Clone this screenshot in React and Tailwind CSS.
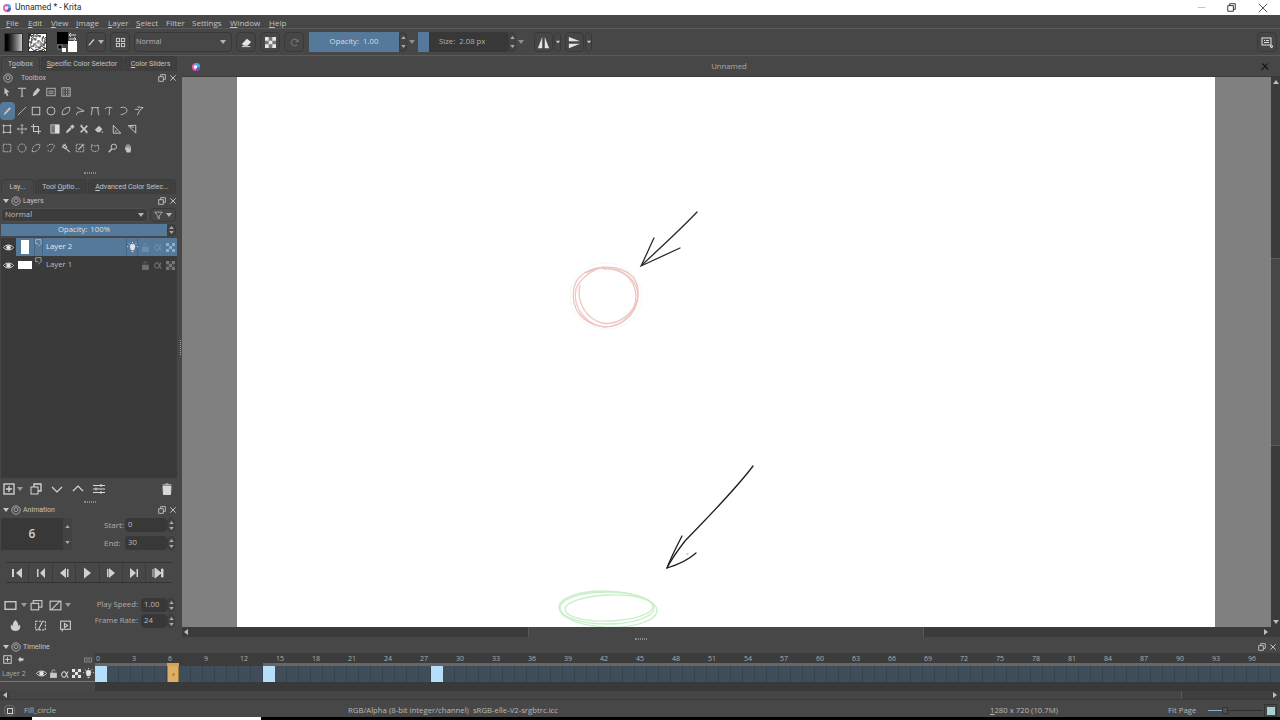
const Ic = ({ size = 12, className = '', children }) => (
  <svg width={size} height={size} viewBox="0 0 12 12" fill="none" stroke="currentColor" strokeWidth="1" className={'shrink-0 ' + className}>
    {children}
  </svg>
);

const Caret = ({ className = 'text-[#b4b4b4]' }) => (
  <svg width="6" height="4" viewBox="0 0 6 4" className={'shrink-0 ' + className}><path d="M0 0h6L3 4z" fill="currentColor" /></svg>
);

const Spin = ({ className = 'w-[8px] h-[18px]' }) => (
  <div className={'flex flex-col items-center justify-around shrink-0 rounded-sm border border-[#3a3a3a] bg-[#434343] text-[#a8a8a8] ' + className}>
    <svg width="5" height="3" viewBox="0 0 6 4"><path d="M0 4h6L3 0z" fill="currentColor" /></svg>
    <svg width="5" height="3" viewBox="0 0 6 4"><path d="M0 0h6L3 4z" fill="currentColor" /></svg>
  </div>
);

const U = ({ children }) => <span className="underline">{children}</span>;

const Btn = ({ className = 'w-[20px]', children }) => (
  <div className={'h-[20px] flex items-center justify-center shrink-0 rounded-sm border border-[#393939] bg-[#464646] text-[#d2d2d2] ' + className}>
    {children}
  </div>
);

const Tab = ({ active, className, children }) => (
  <div className={'h-[15px] pt-[1px] flex items-center justify-center shrink-0 whitespace-nowrap text-[7px] font-[Roboto,sans-serif] border border-b-0 rounded-t-sm border-[#3c3c3c] ' + (active ? 'bg-[#474747] ' : 'bg-[#3f3f3f] ') + className}>
    <span>{children}</span>
  </div>
);

// dock title with the float and close buttons
const DockTitle = ({ title, collapse, className = '' }) => (
  <div className={'h-[13px] flex items-center pl-[3px] pr-[3px] shrink-0 text-[7px] font-[Roboto,sans-serif] ' + className}>
    {collapse && <Caret className="text-[#c8c8c8] mr-[2px]" />}
    <Ic size={10} className="text-[#bdbdbd]"><circle cx="6" cy="6" r="5" /><circle cx="6" cy="5.5" r="2.4" /></Ic>
    <span className={'pt-[2px] ' + (collapse ? 'ml-[2px]' : 'ml-[8px]')}>{title}</span>
    <div className="ml-auto flex items-center gap-[3px] text-[#c8c8c8]">
      <Ic size={8}><path d="M1 4h7v7H1zM4 4V1h7v7H8" strokeWidth="1.3" /></Ic>
      <Ic size={8}><path d="M2 2l8 8M10 2l-8 8" strokeWidth="1.4" /></Ic>
    </div>
  </div>
);

const Num = ({ value, className = '' }) => (
  <div className={'h-[14px] flex items-center bg-[#383838] rounded-sm pl-[3px] text-[#bdbdbd] ' + className}>{value}</div>
);

const Grip = ({ className = '' }) => (
  <div className={'flex justify-center items-center shrink-0 ' + className}>
    <div className="w-[12px] h-[2px] border-y border-dotted border-[#8a8a8a]" />
  </div>
);

const swatchCells = Array.from({ length: 256 }, (_, i) => ((i * 7 + (i % 9) * 3 + ((i * i) % 11)) % 5 < 2 ? 1 : 0));

const toolRows = [
  [
    <path d="M3 1l6 5-3 .5L7.5 10 6 11 4.5 7.5 3 9z" fill="currentColor" stroke="none" />,
    <path d="M2 2.5V1.5h8v1M6 1.5V11M4.5 11h3" strokeWidth="1.3" />,
    <path d="M2 11l1-4 5-6 3 2.5-5 6z" fill="currentColor" stroke="none" />,
    <g><rect x="1" y="1.5" width="10" height="9" /><path d="M3 5h6M3 7.5h6" /></g>,
    <g><rect x="1" y="1" width="10" height="10" /><path d="M3 3h1M6 3h1M9 3h1M3 6h1M6 6h1M9 6h1M3 9h1M6 9h1M9 9h1" strokeWidth="2" /></g>,
  ],
  [
    <path d="M2 11l1-3 6-6.500 1.800 1.500L4.500 9.500z" fill="currentColor" stroke="none" />,
    <path d="M1 11L11 1" />,
    <rect x="1.500" y="1.500" width="9" height="9" strokeWidth="1.200" />,
    <circle cx="6" cy="6" r="4.800" strokeWidth="1.100" />,
    <path d="M1.500 10.500C1 5 4 1.500 10.500 1.500 11 7 8 10.500 1.500 10.500z" strokeWidth="1.100" />,
    <path d="M2 1.500L11 6 3 7.500 1.500 11" strokeWidth="1.100" />,
    <path d="M1 2h10M3 2C2 6 2 9 1.500 11M9 2c1 4 1 7 1.500 9" strokeWidth="1.100" />,
    <path d="M1 3.500C3 1 8 1 10 2.500M7 2C6 5 7 8 6 11" strokeWidth="1.100" />,
    <path d="M2 2c5-1.500 9 1 7 5-1 2-4 3-7 3.500" strokeWidth="1.100" />,
    <path d="M1 4h5M4 1l7 1-4 3M7 5l-3 6" strokeWidth="1.100" />,
  ],
  [
    <g><rect x="2" y="2" width="8" height="8" /><path d="M0.500 2h3M2 .5v3M8.500 2h3M10 .5v3M.5 10h3M2 8.500v3M8.500 10h3M10 8.500v3" /></g>,
    <path d="M6 .5v11M.5 6h11M4.500 2L6 .5 7.500 2M4.500 10L6 11.500 7.500 10M2 4.500L.5 6 2 7.500M10 4.500L11.500 6 10 7.500" />,
    <path d="M3 0v9h9M0 3h9v9" strokeWidth="1.300" />,
    null,
    <g><rect x="1" y="1" width="10" height="10" fill="#777" /><rect x="6" y="1" width="5" height="10" fill="#ddd" stroke="none" /></g>,
    <path d="M1 11l1-3 4-4 2 2-4 4zM6 3l3-2.500 2.500 2.500L9 6z" fill="currentColor" stroke="none" />,
    <path d="M2 2l8 8M10 2l-8 8M2 2h2M10 10H8" strokeWidth="2" />,
    <path d="M1 7l5-5 4 4-3 4H4zM10 8l1 2.500H9z" fill="currentColor" stroke="none" />,
    null,
    <path d="M1.500 11V1.500L10.500 11zM3.500 8.500h2" strokeWidth="1.200" />,
    <path d="M10.500 11V1.500L1.500 2zM8 4L3.500 3" strokeWidth="1.200" />,
  ],
  [
    <rect x="1.500" y="1.500" width="9" height="9" strokeDasharray="2 1" strokeWidth="1.100" />,
    <circle cx="6" cy="6" r="4.800" strokeDasharray="2 1" strokeWidth="1.100" />,
    <path d="M1.500 10.500C1 5 4 1.500 10.500 1.500 11 7 8 10.500 1.500 10.500z" strokeDasharray="2 1" strokeWidth="1.100" />,
    <path d="M1.500 4C3 1 8 .5 10 3c1 3-3 3-3 6 0 2-4 2-5-1" strokeDasharray="2 1" strokeWidth="1.100" />,
    <path d="M10.500 11L5 5.500M2 2l1 1M5 1v2M1 5h2M4.500 2.500L7 5 5 7 2.500 4.500z" strokeWidth="1.300" />,
    <g><rect x="1.500" y="1.500" width="9" height="9" strokeDasharray="2 1" /><path d="M4 8l4-4M8 4l2-2" strokeWidth="1.500" /></g>,
    <path d="M2 2c2 2 6 2 8 0l.5 6C9 11 3 11 1.500 8z" strokeDasharray="2 1" strokeWidth="1.100" />,
    null,
    <g><circle cx="7" cy="4.500" r="3.200" strokeWidth="1.200" /><path d="M4.500 7L1 11" strokeWidth="1.800" /></g>,
    <path d="M2.500 7V4.500h1V6h.5V2h1v3.500h.5V1h1v4.500h.5V2h1v4.500h.5V4h1v4.500L9 11.500H4.500z" fill="currentColor" stroke="none" />,
  ],
];

const ToolRow = ({ items, selected }) => (
  <div className="flex items-center h-[18px] text-[#c4c4c4]">
    {items.map((it, i) =>
      it === null ? (
        <div key={i} className="w-[4px]" />
      ) : (
        <div key={i} className={'w-[14.6px] h-[18px] flex items-center justify-center ' + (i === 0 && selected ? 'bg-[#54799a] rounded-sm' : '')}>
          <Ic size={10}>{it}</Ic>
        </div>
      )
    )}
  </div>
);

const EyeIcon = () => (
  <Ic size={11} className="text-[#e6e6e6]"><path d="M.5 6C3 2.500 9 2.500 11.500 6 9 9.500 3 9.500 .5 6z" /><circle cx="6" cy="6" r="2" fill="currentColor" /></Ic>
);
const LockIcon = ({ className = 'text-[#6f6f6f]' }) => (
  <Ic size={9} className={className}><rect x="2" y="5.500" width="8" height="6" fill="currentColor" /><path d="M4 5.500V3a2 2 0 0 1 4 0" /></Ic>
);
const Alpha = ({ className = 'text-[#6f6f6f]' }) => (
  <Ic size={10} className={className}><path d="M9.500 3C8 7 7 10 5 10 3 10 1.500 8 2 6s3-4 4.500-2 1.500 5 3.500 6.500" strokeWidth="1.300" /></Ic>
);
const Checker = ({ light, dark, size = 9 }) => (
  <svg width={size} height={size} viewBox="0 0 3 3" className="shrink-0">
    <rect width="3" height="3" fill={dark} />
    <path d="M0 0h1v1H0zM2 0h1v1H2zM1 1h1v1H1zM0 2h1v1H0zM2 2h1v1H2z" fill={light} />
  </svg>
);
const Bulb = ({ className = 'text-[#e4e4e4]' }) => (
  <Ic size={11} className={className}><path d="M3.500 5a2.500 2.500 0 1 1 5 0c0 1.500-1 2-1 3.500h-3C4.500 7 3.500 6.500 3.500 5z" fill="currentColor" /><path d="M6 0v1M1 5H0M12 5h-1M2 1.500l1 1M10 1.500l-1 1M5 10.500h2" /></Ic>
);
const LinkMark = () => (
  <Ic size={8} className="text-[#cfcfcf]"><path d="M1 1h8v5M5 11l5-5M1 1v6h4" /></Ic>
);

const transport = [
  <path d="M1 2h2v8H1zM11 1v10L5 6z" fill="currentColor" stroke="none" />,
  <path d="M2 2h1.500v8H2zM10 1v10L5 6z" fill="currentColor" stroke="none" />,
  <path d="M8 1v10L2 6zM9 2h1.500v8H9z" fill="currentColor" stroke="none" />,
  <path d="M3 .5v11L10 6z" fill="currentColor" stroke="none" />,
  <path d="M2 2h1.500v8H2zM4 1v10l6-5z" fill="currentColor" stroke="none" />,
  <path d="M2 1v10l6-5zM8.500 2H10v8H8.500z" fill="currentColor" stroke="none" />,
  <path d="M1 2v8M3 1v10l6-5zM9.500 2H11v8H9.500z" fill="currentColor" />,
];

const ticks = Array.from({ length: 33 }, (_, i) => i * 3);
const menus = [
  ['F', 'ile', 'w-[22px]'], ['E', 'dit', 'w-[23px]'], ['V', 'iew', 'w-[25px]'], ['I', 'mage', 'w-[32px]'], ['L', 'ayer', 'w-[28px]'],
  ['S', 'elect', 'w-[30px]'], ['', 'Filter', 'w-[26px]'], ['', 'Settings', 'w-[38px]'], ['W', 'indow', 'w-[39px]'], ['H', 'elp', 'w-[24px]'],
];

export default function App() {
  return (
    <div className="w-[1280px] h-[720px] overflow-hidden flex flex-col bg-[#474747] text-[#c4c4c4] text-[7.75px] leading-none font-['Open_Sans',sans-serif]">
      {/* window title */}
      <div className="h-[15px] bg-white flex items-center shrink-0 text-[#2a2a2a] text-[8.5px] font-[Roboto,sans-serif]">
        <svg width="10" height="10" viewBox="0 0 10 10" className="ml-[2px] mr-[3px]">
          <circle cx="5" cy="5" r="4" fill="#e85bb0" /><path d="M5 5V1a4 4 0 0 1 4 4z" fill="#39b7e8" /><path d="M5 5h4a4 4 0 0 1-4 4z" fill="#7a4cc4" /><circle cx="4.500" cy="5" r="1.800" fill="#fff" />
        </svg>
        <span>Unnamed * - Krita</span>
        <div className="ml-auto flex items-center text-[#333]">
          <div className="w-[30px] flex justify-center"><Ic size={9} className="text-[#bdbdbd]"><path d="M1 6h10" strokeWidth="1.200" /></Ic></div>
          <div className="w-[31px] flex justify-center"><Ic size={9}><path d="M1 3.500h7.500V11H1zM3.500 3.500V1H11v7.500H8.500" strokeWidth="1.300" /></Ic></div>
          <div className="w-[32px] flex justify-center mr-[1px]"><Ic size={10}><path d="M1 1l10 10M11 1L1 11" strokeWidth="1" /></Ic></div>
        </div>
      </div>

      {/* menu bar */}
      <div className="h-[14px] pt-[2px] flex items-center pl-[4px] shrink-0 text-[8px] text-[#c2c2c2] border-b border-[#5a5a5a]">
        {menus.map(([m, rest, w]) => (
          <div key={rest} className={'shrink-0 pl-[2px] ' + w}>{m && <U>{m}</U>}{rest}</div>
        ))}
      </div>

      {/* tool bar */}
      <div className="h-[27px] flex items-center shrink-0 pl-[4px] pr-[3px] border-b border-[#5a5a5a]">
        <div className="w-[19px] h-[19px] bg-gradient-to-r from-black to-[#c8c8c8] border border-[#2f2f2f]" />
        <svg width="19" height="19" viewBox="0 0 16 16" className="ml-[5px] bg-white shrink-0 border border-[#2f2f2f]">
          {swatchCells.map((c, i) => c ? <rect key={i} x={i % 16} y={Math.floor(i / 16)} width="1" height="1" fill="#222" /> : null)}
        </svg>
        <svg width="20" height="20" viewBox="0 0 20 20" className="ml-[10px] shrink-0">
          <rect x="0" y="0" width="11" height="12" fill="#000" />
          <rect x="11" y="9" width="9" height="11" fill="#fff" />
          <rect x="1" y="13" width="4" height="4" fill="#000" stroke="#ccc" strokeWidth="0.500" />
          <rect x="5" y="16" width="4" height="4" fill="#fff" />
          <path d="M12 3h7M14 1l-2 2 2 2M12 7h7M17 5l2 2-2 2" stroke="#ddd" fill="none" />
        </svg>
        <Btn className="ml-[9px] w-[20px]">
          <Ic size={10}><path d="M1 10l6-7" strokeWidth="1.500" /></Ic>
          <Caret />
        </Btn>
        <Btn className="ml-[4px] w-[20px]">
          <Ic size={11}><rect x="1.500" y="1.500" width="3.500" height="3.500" /><rect x="7" y="1.500" width="3.500" height="3.500" /><rect x="1.500" y="7" width="3.500" height="3.500" /><rect x="7" y="7" width="3.500" height="3.500" /></Ic>
        </Btn>
        <div className="ml-[4px] w-[98px] h-[20px] flex items-center justify-between pl-[1px] pr-[5px] rounded-sm border border-[#393939] shrink-0 text-[#b8b8b8] text-[7.25px]">
          <span>Normal</span><Caret />
        </div>
        <Btn className="ml-[4px] w-[20px]">
          <Ic size={11} className="text-[#e6e6e6]"><path d="M1 7.500L6.500 2 11 5.500 7 9.500H3z" fill="currentColor" stroke="none" /><path d="M1 10.500h9" /></Ic>
        </Btn>
        <Btn className="ml-[4px] w-[20px]"><Checker light="#e8e8e8" dark="#777" size={11} /></Btn>
        <Btn className="ml-[4px] w-[20px]">
          <Ic size={9} className="text-[#8c8c8c]"><path d="M10.500 5A4.500 4.500 0 1 0 9.500 9M10.500 2v3h-3" /></Ic>
        </Btn>
        <div className="ml-[5px] w-[90px] h-[20px] flex items-center justify-center bg-[#54799a] text-[#d6dde4] shrink-0 gap-[4px]">
          <span>Opacity:</span><span>1.00</span>
        </div>
        <Spin className="w-[8px] h-[20px]" />
        <Caret className="ml-[2px] text-[#8f8f8f]" />
        <div className="ml-[3px] w-[90px] h-[20px] flex items-center bg-[#383838] shrink-0">
          <div className="w-[11px] h-full bg-[#54799a]" />
          <span className="ml-[10px] text-[#b0b0b0]">Size:</span><span className="ml-[4px] text-[#b0b0b0]">2.08 px</span>
        </div>
        <Spin className="w-[8px] h-[20px]" />
        <Caret className="ml-[2px] text-[#8f8f8f]" />
        <Btn className="ml-[10px] w-[19px]">
          <Ic size={15} className="text-[#e4e4e4]"><path d="M5 1.500v9H1.500zM7 1.500v9h3.500z" fill="currentColor" stroke="none" /></Ic>
        </Btn>
        <div className="ml-[1px] w-[7px] h-[20px] rounded-sm border border-[#393939] flex items-center justify-center"><Caret className="text-[#c8c8c8] scale-75" /></div>
        <Btn className="ml-[4px] w-[19px]">
          <Ic size={15} className="text-[#e4e4e4]"><path d="M1.500 5h9L1.500 1.500zM1.500 7h9L1.500 10.500z" fill="currentColor" stroke="none" /></Ic>
        </Btn>
        <div className="ml-[1px] w-[7px] h-[20px] rounded-sm border border-[#393939] flex items-center justify-center"><Caret className="text-[#c8c8c8] scale-75" /></div>
        <Btn className="ml-auto w-[20px]">
          <Ic size={12} className="text-[#e4e4e4]"><rect x="1" y="2" width="9" height="7" /><path d="M3 4.500h1M5 4.500h3M3 6.500h5M9 10h3l-1.500 2z" /></Ic>
        </Btn>
      </div>

      {/* main area */}
      <div className="h-[584px] flex shrink-0">
        {/* docks */}
        <div className="w-[180px] shrink-0 flex flex-col">
          <div className="h-[15px] flex items-end pl-[1px] gap-[1px] shrink-0">
            <Tab active className="w-[39px]">T<U>o</U>olbox</Tab>
            <Tab className="w-[82px]"><U>S</U>pecific Color Selector</Tab>
            <Tab className="w-[53px]"><U>C</U>olor Sliders</Tab>
          </div>
          <DockTitle title="Toolbox" className="text-[#c0c0c0]" />
          <div className="h-[85px] mt-[-1px] flex flex-col gap-[0.67px] shrink-0">
            <ToolRow items={toolRows[0]} />
            <ToolRow items={toolRows[1]} selected />
            <ToolRow items={toolRows[2]} />
            <ToolRow items={toolRows[3]} />
          </div>
          <Grip className="h-[10px]" />
          <div className="h-[15px] flex items-end pl-[1px] gap-[1px] shrink-0 mt-[1px]">
            <Tab active className="w-[33px]">Lay...</Tab>
            <Tab className="w-[52px]">Tool <U>O</U>ptio...</Tab>
            <Tab className="w-[88px]"><U>A</U>dvanced Color Selec...</Tab>
          </div>
          <DockTitle title="Layers" collapse />

          <div className="flex items-center pl-[1px] pr-[4px] gap-[2px] h-[14px] mt-[1px] shrink-0">
            <div className="flex-1 h-[14px] bg-[#3c3c3c] rounded-sm flex items-center justify-between pl-[3px] pr-[3px] border border-[#505050]">
              <span className="text-[#bcbcbc]">Normal</span><Caret />
            </div>
            <div className="w-[26px] h-[14px] rounded-sm border border-[#393939] flex items-center justify-center gap-[3px]">
              <Ic size={9}><path d="M1 1.500h10L7 6.500v4L5 9V6.500z" /></Ic><Caret />
            </div>
          </div>
          <div className="flex items-center h-[13px] pl-[1px] pr-[4px] mt-[1px] shrink-0">
            <div className="flex-1 h-[12px] bg-[#54799a] flex items-center justify-center text-[#d8e0e8] gap-[3px]"><span>Opacity:</span><span>100%</span></div>
            <Spin className="w-[9px] h-[12px]" />
          </div>
          {/* layer list */}
          <div className="h-[240px] mt-[2px] ml-[1px] mr-[3px] bg-[#3a3a3a] shrink-0 flex flex-col">
            <div className="h-[18px] flex items-center shrink-0">
              <div className="w-[15px] flex justify-center"><EyeIcon /></div>
              <div className="flex-1 h-full bg-[#54799a] flex items-center text-[#e2e8ee]">
                <div className="w-[18px] flex justify-center"><div className="w-[8px] h-[14px] bg-white" /></div>
                <div className="w-[9px] h-full flex justify-center pt-[1px] border-x border-[#466682]"><LinkMark /></div>
                <span className="ml-[3px]">Layer 2</span>
                <div className="ml-auto flex items-center h-full">
                  <div className="w-[12px] h-full flex items-center justify-center border-x border-[#466682]"><Bulb /></div>
                  <div className="w-[14px] flex justify-center"><LockIcon className="text-[#6f8da8]" /></div>
                  <div className="w-[12px] flex justify-center"><Alpha className="text-[#6f8da8]" /></div>
                  <div className="w-[13px] flex justify-center"><Checker light="#8db0cf" dark="#54799a" /></div>
                </div>
              </div>
            </div>
            <div className="h-[18px] flex items-center shrink-0">
              <div className="w-[15px] flex justify-center"><EyeIcon /></div>
              <div className="flex-1 h-full flex items-center text-[#bdbdbd]">
                <div className="w-[18px] flex justify-center"><div className="w-[14px] h-[8px] bg-white" /></div>
                <div className="w-[9px] h-full flex justify-center pt-[1px]"><LinkMark /></div>
                <span className="ml-[3px]">Layer 1</span>
                <div className="ml-auto flex items-center h-full">
                  <div className="w-[14px] flex justify-center"><LockIcon /></div>
                  <div className="w-[12px] flex justify-center"><Alpha /></div>
                  <div className="w-[13px] flex justify-center"><Checker light="#777" dark="#4a4a4a" /></div>
                </div>
              </div>
            </div>
          </div>
          {/* layer buttons */}
          <div className="h-[22px] flex items-center pl-[3px] pr-[7px] text-[#d8d8d8] shrink-0">
            <Ic size={12}><rect x="1" y="1" width="10" height="10" strokeWidth="1.300" /><path d="M6 3v6M3 6h6" strokeWidth="1.300" /></Ic>
            <Caret className="ml-[2px] text-[#9a9a9a]" />
            <Ic size={12} className="ml-[7px]"><rect x="1" y="4" width="7" height="7" /><path d="M4 4V1h7v7H8" strokeWidth="1.300" /></Ic>
            <Ic size={12} className="ml-[9px]"><path d="M1 4l5 5 5-5" strokeWidth="1.200" /></Ic>
            <Ic size={12} className="ml-[9px]"><path d="M1 8l5-5 5 5" strokeWidth="1.200" /></Ic>
            <Ic size={12} className="ml-[9px]"><path d="M0 2.500h12M0 6h12M0 9.500h12M8 1v3M3 4.500v3M8 8v3" /></Ic>
            <Ic size={12} className="ml-auto"><path d="M2 3.500h8L9.500 11.500h-7zM1.500 2h9M4.500 1h3" fill="currentColor" /></Ic>
          </div>
          <Grip className="h-[3px]" />
          <DockTitle title="Animation" collapse />
          {/* animation */}
          <div className="flex h-[32px] mt-[2px] shrink-0">
            <div className="ml-[1px] w-[62px] bg-[#383838] flex items-center justify-center text-[12px] font-semibold text-[#d0d0d0]">6</div>
            <div className="w-[9px] flex flex-col justify-around items-center bg-[#424242] text-[#a8a8a8]">
              <svg width="5" height="3" viewBox="0 0 6 4"><path d="M0 4h6L3 0z" fill="currentColor" /></svg>
              <svg width="5" height="3" viewBox="0 0 6 4"><path d="M0 0h6L3 4z" fill="currentColor" /></svg>
            </div>
            <div className="flex-1 flex flex-col justify-between pr-[5px]">
              <div className="flex items-center h-[14px] pl-[32px] text-[8px]">
                <span className="text-[#b0b0b0] w-[21px]">Start:</span>
                <Num value="0" className="w-[42px] text-[7.75px]" /><Spin className="w-[8px] h-[14px]" />
              </div>
              <div className="flex items-center h-[14px] pl-[32px] text-[8px]">
                <span className="text-[#b0b0b0] w-[21px]">End:</span>
                <Num value="30" className="w-[42px] text-[7.75px]" /><Spin className="w-[8px] h-[14px]" />
              </div>
            </div>
          </div>
          <div className="mt-[12px] mx-[6px] h-[21px] flex items-center border-y border-[#333] text-[#d0d0d0] shrink-0 w-[166px]">
            {transport.map((p, i) => (
              <div key={i} className="w-[23.4px] h-full flex items-center justify-center border-r border-[#3c3c3c] last:border-r-0">
                <Ic size={12}>{p}</Ic>
              </div>
            ))}
          </div>
          <div className="flex mt-[15px] h-[34px] shrink-0 text-[#cfcfcf]">
            <div className="w-[98px] pl-[4px] flex flex-col gap-[6px]">
              <div className="flex items-center h-[14px]">
                <Ic size={13}><rect x="1" y="2.500" width="10" height="7" strokeWidth="1.200" /><path d="M.5 2.500h1M.5 9.500h1" /></Ic>
                <Caret className="ml-[4px] text-[#9a9a9a]" />
                <Ic size={13} className="ml-[3px]"><rect x="3" y="1.500" width="8" height="6" /><rect x="1" y="4" width="7" height="6" fill="#474747" /></Ic>
                <Ic size={13} className="ml-[6px]"><rect x="1" y="2" width="10" height="8" /><path d="M2 10l8-8" /></Ic>
                <Caret className="ml-[3px] text-[#9a9a9a]" />
              </div>
              <div className="flex items-center h-[14px] pl-[5px]">
                <Ic size={13}><path d="M6 11C2 11 1 8 2 5c1 1 1 1 1.500 2C3 4 5 2 6 1c1 1 3 3 2.500 6C9 6 9 6 10 5c1 3 0 6-4 6z" fill="currentColor" stroke="none" /></Ic>
                <Ic size={13} className="ml-[12px]"><rect x="1.500" y="2" width="9" height="8" strokeDasharray="2 1" /><path d="M4 10l4-8" /></Ic>
                <Ic size={13} className="ml-[12px]"><rect x="1.500" y="2" width="9" height="7.500" /><path d="M5 4l3 2-3 2zM3 9.500v2" /></Ic>
              </div>
            </div>
            <div className="flex-1 pr-[5px] flex flex-col gap-[2px] text-[#adadad]">
              <div className="flex items-center justify-end h-[14px]">
                <span className="mr-[3px] whitespace-nowrap">Play Speed:</span>
                <Num value="1.00" className="w-[26px]" /><Spin className="w-[8px] h-[14px]" />
              </div>
              <div className="flex items-center justify-end h-[14px]">
                <span className="mr-[3px] whitespace-nowrap">Frame Rate:</span>
                <Num value="24" className="w-[26px]" /><Spin className="w-[8px] h-[14px]" />
              </div>
            </div>
          </div>
        </div>

        {/* splitter */}
        <div className="w-[2px] shrink-0 pt-[284px]">
          <div className="w-[1px] h-[15px] border-l border-dotted border-[#a0a0a0]" />
        </div>

        {/* document */}
        <div className="flex-1 flex flex-col min-w-0">
          <div className="h-[21px] pt-[1px] flex items-center shrink-0 pl-[9px] pr-[11px] border-b border-[#3a3a3a]">
            <svg width="10" height="10" viewBox="0 0 10 10" className="shrink-0">
              <circle cx="5" cy="5" r="4" fill="#e85bb0" /><path d="M5 5V1a4 4 0 0 1 4 4z" fill="#39b7e8" /><path d="M5 5h4a4 4 0 0 1-4 4z" fill="#7a4cc4" /><circle cx="4.500" cy="5" r="1.800" fill="#fff" />
            </svg>
            <span className="flex-1 text-center text-[#aaaaaa] pr-[3px]">Unnamed</span>
            <Ic size={9} className="text-[#141414]"><path d="M2 11L10 2M3 2l8 8" strokeWidth="1.500" /></Ic>
          </div>
          <div className="h-[550px] flex shrink-0">
            <div className="w-[1089px] bg-[#808080] flex pl-[55px] shrink-0">
              <div className="w-[978px] h-full bg-white relative overflow-hidden">
                <svg className="absolute inset-0" width="978" height="550" viewBox="237 77 978 550" fill="none">
                  <g transform="translate(0 1)">
                    <ellipse cx="606" cy="295" rx="36" ry="33" stroke="#eef7ee" strokeWidth="0.800" />
                    <g stroke="#eec7c3" strokeWidth="1.300">
                      <path d="M580 276C590 264 620 262 633 276 644 290 636 316 616 324 596 330 578 318 574 302 572 290 574 280 582 274" />
                      <path d="M586 272C602 262 630 268 637 288 642 306 626 326 604 326 586 324 572 306 576 288 580 278 592 268 604 266" />
                      <path d="M603 268C620 266 634 276 636 294 637 312 618 325 602 322 586 318 576 300 580 284" />
                    </g>
                  </g>
                  <g stroke="#2a2a2a" strokeLinecap="round">
                    <path d="M697 212C680 230 660 248 642 265" strokeWidth="1.300" />
                    <path d="M654 238C650 246 646 256 641 266L680 248" strokeWidth="1.300" />
                  </g>
                  <g stroke="#c8efc8" strokeWidth="1.300">
                    <ellipse cx="607" cy="608" rx="47" ry="16" />
                    <ellipse cx="609" cy="608" rx="44" ry="13" transform="rotate(-2 609 608)" />
                    <ellipse cx="608" cy="609" rx="49" ry="18" transform="rotate(2 606 609)" />
                  </g>
                  <g stroke="#1f1f1f" strokeLinecap="round">
                    <path d="M753 466C735 490 710 515 685 541 678 550 672 558 667 568" strokeWidth="1.300" />
                    <path d="M682 536C677 546 671 557 667 568 677 565 687 561 696 553" strokeWidth="1.300" />
                    <path d="M687 554h1" strokeWidth="0.800" stroke="#777" />
                  </g>
                </svg>
              </div>
            </div>
            <div className="w-[9px] bg-[#3b3b3b] flex flex-col items-center pt-[3px] pb-[3px] shrink-0">
              <svg width="6" height="4" viewBox="0 0 6 4" className="text-[#bdbdbd] shrink-0"><path d="M0 4h6L3 0z" fill="currentColor" /></svg>
              <div className="w-full h-[188px] mt-[174px] bg-[#474747] border-y border-[#5a5a5a] shrink-0" />
              <svg width="6" height="4" viewBox="0 0 6 4" className="mt-auto text-[#bdbdbd] shrink-0"><path d="M0 0h6L3 4z" fill="currentColor" /></svg>
            </div>
          </div>
          <div className="h-[10px] flex items-center bg-[#3b3b3b] shrink-0">
            <svg width="4" height="6" viewBox="0 0 4 6" className="ml-[2px] text-[#bdbdbd]"><path d="M4 0v6L0 3z" fill="currentColor" /></svg>
            <div className="ml-[340px] w-[396px] h-full bg-[#474747] border-x border-[#5a5a5a]" />
            <svg width="4" height="6" viewBox="0 0 4 6" className="ml-auto mr-[12px] text-[#bdbdbd]"><path d="M0 0v6l4-3z" fill="currentColor" /></svg>
          </div>
          <Grip className="h-[3px] pr-[180px]" />
        </div>
      </div>

      {/* timeline */}
      <div className="h-[59px] shrink-0 flex flex-col">
        <DockTitle title="Timeline" collapse className="h-[13px]" />
        <div className="h-[13px] flex shrink-0">
          <div className="w-[95px] flex items-center pl-[3px] bg-[#474747] text-[#d0d0d0] shrink-0">
            <Ic size={9}><rect x="1" y="1" width="10" height="10" strokeWidth="1.300" /><path d="M6 3v6M3 6h6" strokeWidth="1.300" /></Ic>
            <Ic size={7} className="ml-[5px]"><path d="M6 1l-4 5 4 5zM6 4h5v4H6z" fill="currentColor" stroke="none" /></Ic>
            <Ic size={8} className="ml-auto mr-[3px] text-[#a8a8a8]"><rect x="1" y="3" width="10" height="6" /><path d="M3 6h6" /></Ic>
          </div>
          <div className="flex-1 flex flex-col overflow-hidden bg-[#3c3c3c]">
            <div className="h-[10px] flex shrink-0 items-center text-[#aeaeae] text-[7px]">
              {ticks.map((t) => (
                <div key={t} className="w-[36px] shrink-0 pl-[1px]">{t}</div>
              ))}
            </div>
            <div className="h-[3px] flex shrink-0">
              <div className="w-[72px] bg-[#666666] shrink-0" />
              <div className="w-[12px] bg-[#d9a24f] shrink-0" />
              <div className="w-[84px] bg-[#3c3c3c] shrink-0" />
              <div className="flex-1 bg-[#666666]" />
            </div>
          </div>
        </div>
        <div className="h-[16px] flex shrink-0">
          <div className="w-[95px] flex items-center pl-[2px] pr-[1px] shrink-0 border-b border-[#5f7d96] text-[#adadad] text-[7px]">
            <span>Layer 2</span>
            <div className="ml-auto flex items-center gap-[2px]"><EyeIcon /><LockIcon className="text-[#c8c8c8]" /><Alpha className="text-[#c8c8c8]" /><Checker light="#e4e4e4" dark="#555" /><Bulb /></div>
          </div>
          <div className="flex-1 flex bg-[repeating-linear-gradient(90deg,#3f4e5a_0,#3f4e5a_11px,#36434e_11px,#36434e_12px)]">
            <div className="w-[12px] bg-[#b5defa] shrink-0" />
            <div className="w-[60px] shrink-0" />
            <div className="w-[12px] bg-[#dcb069] border-x border-[#a07a3c] flex items-center justify-center shrink-0">
              <div className="w-[3px] h-[3px] rounded-full bg-[#c8831f]" />
            </div>
            <div className="w-[84px] shrink-0" />
            <div className="w-[12px] bg-[#b5defa] shrink-0" />
            <div className="w-[156px] shrink-0" />
            <div className="w-[12px] bg-[#b5defa] shrink-0" />
          </div>
        </div>
        <div className="h-[9px] flex shrink-0">
          <div className="w-[95px] shrink-0" />
          <div className="flex-1 bg-[#393939]" />
        </div>
        <div className="h-[8px] flex items-center bg-[#3f3f3f] shrink-0">
          <svg width="4" height="6" viewBox="0 0 4 6" className="ml-[3px] text-[#bdbdbd]"><path d="M4 0v6L0 3z" fill="currentColor" /></svg>
          <div className="ml-[3px] flex-1 h-full border-r border-[#5a5a5a] bg-[#454545] mr-[91px]" />
          <svg width="4" height="6" viewBox="0 0 4 6" className="mr-[3px] text-[#bdbdbd]"><path d="M0 0v6l4-3z" fill="currentColor" /></svg>
        </div>
      </div>

      {/* status bar */}
      <div className="h-[18px] pt-[4px] flex items-center shrink-0 text-[#b8b8b8] border-t border-[#3a3a3a]">
        <div className="w-[11px] h-[11px] ml-[4px] border border-[#6a6a6a] flex items-center justify-center rounded-sm">
          <div className="w-[6px] h-[6px] border border-dashed border-[#cfcfcf]" />
        </div>
        <span className="ml-[9px] w-[324px]">Fill_circle</span>
        <span className="w-[642px]">RGB/Alpha (8-bit integer/channel)&nbsp; sRGB-elle-V2-srgbtrc.icc</span>
        <span className="w-[178px]"><U>1</U>280 x 720 (10.7M)</span>
        <span className="w-[40px]">Fit Page</span>
        <div className="w-[54px] h-[9px] flex items-center shrink-0">
          <div className="w-[14px] h-[1px] bg-[#8fb0c8]" />
          <div className="w-[6px] h-[7px] bg-[#505050] border border-[#2f2f2f] rounded-[1px]" />
          <div className="flex-1 h-[1px] bg-[#2f2f2f]" />
        </div>
        <div className="ml-[2px] w-[13px] h-[13px] border border-[#333] flex items-center justify-center">
          <div className="w-[8px] h-[8px] bg-[#a6d0d8] flex items-center justify-center"><div className="w-[3px] h-[3px] bg-[#d8c878]" /></div>
        </div>
      </div>
      <div className="flex-1 bg-black flex">
        <div className="ml-[32px] w-[229px] bg-white" />
      </div>
    </div>
  );
}
